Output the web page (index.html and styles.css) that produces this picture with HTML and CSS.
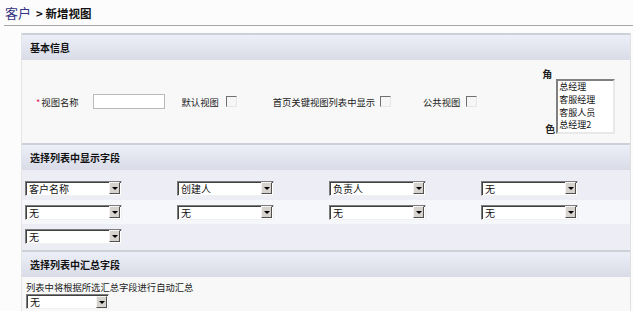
FILE: index.html
```html
<!DOCTYPE html>
<html lang="zh-CN">
<head>
<meta charset="UTF-8">
<title>新增视图</title>
<link rel="stylesheet" href="styles.css">
</head>
<body>
<div class="crumb"><span class="module">客户</span><span class="here">&gt; 新增视图</span></div>

<div class="panel">
  <div class="sec-head">基本信息</div>
  <div class="basic">
    <span class="lbl name"><span class="req">*</span>视图名称</span>
    <span class="txt"></span>
    <span class="lbl l-default">默认视图</span>
    <span class="cb c-default"></span>
    <span class="lbl l-home">首页关键视图列表中显示</span>
    <span class="cb c-home"></span>
    <span class="lbl l-public">公共视图</span>
    <span class="cb c-public"></span>
    <div class="role">
      <div class="role-lbl"><span>角</span><span class="lo">色</span></div>
      <div class="listbox">
        <div>总经理</div>
        <div>客服经理</div>
        <div>客服人员</div>
        <div>总经理2</div>
      </div>
    </div>
  </div>

  <div class="sec-head">选择列表中显示字段</div>
  <div class="fields">
    <div class="row">
      <span class="sel"><span class="val">客户名称</span><span class="arrow"></span></span>
      <span class="sel"><span class="val">创建人</span><span class="arrow"></span></span>
      <span class="sel"><span class="val">负责人</span><span class="arrow"></span></span>
      <span class="sel"><span class="val">无</span><span class="arrow"></span></span>
    </div>
    <div class="row alt">
      <span class="sel"><span class="val">无</span><span class="arrow"></span></span>
      <span class="sel"><span class="val">无</span><span class="arrow"></span></span>
      <span class="sel"><span class="val">无</span><span class="arrow"></span></span>
      <span class="sel"><span class="val">无</span><span class="arrow"></span></span>
    </div>
    <div class="row">
      <span class="sel"><span class="val">无</span><span class="arrow"></span></span>
    </div>
  </div>

  <div class="sec-head">选择列表中汇总字段</div>
  <div class="summary">
    <div class="note">列表中将根据所选汇总字段进行自动汇总</div>
    <span class="sel short"><span class="val">无</span><span class="arrow"></span></span>
  </div>
</div>
</body>
</html>
```

FILE: styles.css
```css
body { margin: 0; background: #fcfcfc; font-family: "Noto Sans CJK SC", "DejaVu Sans", sans-serif; font-size: 9.3px; color: #222; }

.crumb { margin-left: 4px; height: 25px; line-height: 25px; border-bottom: 1px solid #a8a8a8; padding-left: 1px; }
.module { font-size: 13px; color: #333380; }
.here { font-size: 11.5px; font-weight: bold; color: #111; margin-left: 5px; }

.panel { margin: 7px 0 0 21px; width: 608px; border-left: 1px solid #e4e4e4; border-right: 1px solid #e0e0e0; }

.sec-head { height: 25px; line-height: 25px; border-top: 2px solid #cdd0d6; padding-left: 8px; font-size: 10px; font-weight: bold; color: #111;
  background: linear-gradient(#eceff8, #d9dce6); }

.basic { height: 83px; background: #f7f8f7; display: flex; align-items: center; padding-left: 14px; }
.req { color: #e0306a; margin-right: 1px; }
.txt { width: 70px; height: 13px; margin-left: 14px; background: #fff; border: 1px solid #b9b9b9; }
.l-default { margin-left: 17px; }
.l-home { margin-left: 36px; }
.l-public { margin-left: 32px; }
.cb { width: 9px; height: 9px; background: #f6f6f6; border: 1px solid; border-color: #707070 #e6e6e6 #e6e6e6 #707070; }
.c-default { margin-left: 7px; }
.c-home { margin-left: 5px; }
.c-public { margin-left: 6px; }

.role { display: flex; margin-left: 65px; height: 67px; }
.role-lbl { display: flex; flex-direction: column; justify-content: space-between; width: 13px; font-size: 10px; line-height: 12px; font-weight: bold; }
.role-lbl .lo { padding-left: 3px; }
.listbox { margin: 11px 0 0 1px; width: 54px; height: 51px; background: #fff; border: 2px solid; border-color: #808080 #e8e8e8 #e8e8e8 #808080;
  font-size: 9px; line-height: 12.75px; color: #111; padding-left: 1px; overflow: hidden; }

.fields { background: #ecedf5; padding-top: 6px; padding-bottom: 2px; }
.row { height: 24px; display: grid; grid-template-columns: repeat(4, 152px); align-items: center; padding-left: 3px; }
.row.alt { background: #f6f7fa; }

.sel { display: flex; align-items: center; justify-content: space-between; width: 93px; height: 11px; padding: 1px; background: #fff;
  border: 1px solid; border-color: #7c7c7c #f0f0f0 #f0f0f0 #7c7c7c; box-shadow: inset 1px 1px #404040; font-size: 10px; color: #111; }
.sel.short { width: 79px; }
.val { padding-left: 2px; line-height: 11px; }
.arrow { position: relative; width: 9px; height: 10px; background: #d6d3cc; border: 1px solid; border-color: #f4f4f4 #505050 #505050 #f4f4f4; }
.arrow::after { content: ""; position: absolute; left: 2px; top: 4px; border: 3px solid transparent; border-top: 3px solid #000; border-bottom: 0; }

.summary { background: #f7f8f7; padding: 4px 0 3px 4px; }
.note { line-height: 12px; margin-bottom: 1px; }
```
